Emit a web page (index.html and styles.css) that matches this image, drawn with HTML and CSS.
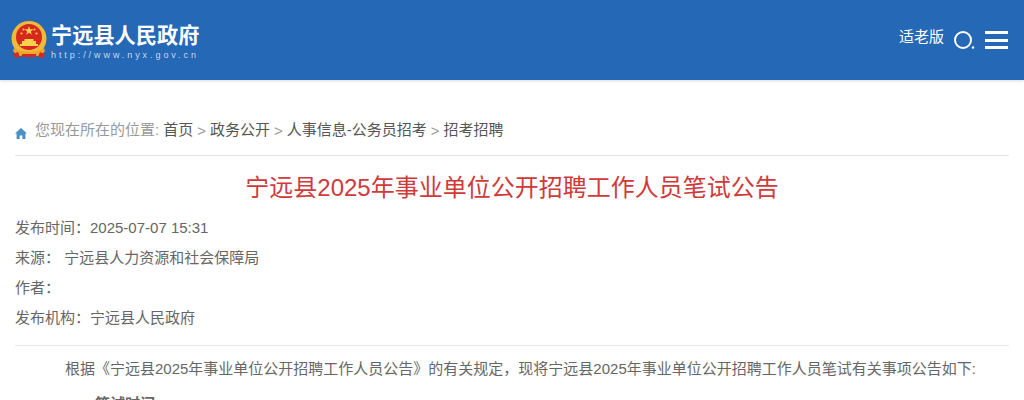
FILE: index.html
```html
<!DOCTYPE html>
<html lang="zh-CN">
<head>
    <meta charset="UTF-8">
    <title>宁远县2025年事业单位公开招聘工作人员笔试公告</title>
    <link rel="stylesheet" href="styles.css">
</head>
<body>
<header class="site-header">
    <div class="logo">
        <svg class="emblem" width="38" height="38" viewBox="0 0 38 38">
            <circle cx="19" cy="17.5" r="17.5" fill="#f0b93a"/>
            <circle cx="19" cy="16" r="13" fill="#d8281e"/>
            <polygon points="19,5 20.1,8.3 23.6,8.3 20.8,10.4 21.8,13.7 19,11.7 16.2,13.7 17.2,10.4 14.4,8.3 17.9,8.3" fill="#f7d34c"/>
            <circle cx="11.5" cy="12.5" r="1.1" fill="#f7d34c"/>
            <circle cx="26.5" cy="12.5" r="1.1" fill="#f7d34c"/>
            <circle cx="13.5" cy="8.5" r="1" fill="#f7d34c"/>
            <circle cx="24.5" cy="8.5" r="1" fill="#f7d34c"/>
            <path d="M10 25v-2h2v-3h2.5v-2h9v2H26v3h2v2z" fill="#f7d34c"/>
            <path d="M4 27c4 3 9 4 15 4s11-1 15-4l1 3c-2 3-5 5-8 5l-4-2-4 2-4-2-4 2c-3 0-6-2-8-5z" fill="#eaa62e"/>
            <path d="M3 33l5-2 2 5-5 1zM35 33l-5-2-2 5 5 1zM12 33h14v3H12z" fill="#d8281e"/>
        </svg>
        <div class="logo-text">
            <div class="logo-name">宁远县人民政府</div>
            <div class="logo-url">http://www.nyx.gov.cn</div>
        </div>
    </div>
    <div class="tools">
        <span class="elder">适老版</span>
        <svg class="search-icon" width="21" height="20" viewBox="0 0 21 20">
            <circle cx="9" cy="10" r="8" fill="none" stroke="#fff" stroke-width="2"/>
            <circle cx="19" cy="17.5" r="1.2" fill="#fff"/>
        </svg>
        <div class="menu-icon"><span></span><span></span><span></span></div>
    </div>
</header>

<main class="content">
    <div class="crumbs">
        <svg class="home-icon" width="12" height="11" viewBox="0 0 12 11">
            <path d="M6 0L12 5.6H10.4V11H7.4V7.4H4.6V11H1.6V5.6H0z" fill="#4a90c4"/>
        </svg>
        <span class="crumb-label">您现在所在的位置:</span>
        <a>首页</a><i>&gt;</i><a>政务公开</a><i>&gt;</i><a>人事信息-公务员招考</a><i>&gt;</i><a>招考招聘</a>
    </div>

    <h1 class="title">宁远县2025年事业单位公开招聘工作人员笔试公告</h1>

    <ul class="meta">
        <li>发布时间：2025-07-07 15:31</li>
        <li>来源： 宁远县人力资源和社会保障局</li>
        <li>作者：</li>
        <li>发布机构：宁远县人民政府</li>
    </ul>

    <div class="article">
        <p>根据《宁远县2025年事业单位公开招聘工作人员公告》的有关规定，现将宁远县2025年事业单位公开招聘工作人员笔试有关事项公告如下:</p>
        <p class="section">一、笔试时间</p>
    </div>
</main>
</body>
</html>
```

FILE: styles.css
```css
html, body {
    margin: 0;
    height: 400px;
    overflow: hidden;
}
body {
    font-family: "Liberation Sans", "Noto Sans CJK SC", sans-serif;
    font-size: 15px;
    color: #666;
    background: #fff;
}
.site-header {
    display: flex;
    justify-content: space-between;
    align-items: center;
    height: 80px;
    padding: 0 16px 0 10px;
    background: #2468b6;
    box-shadow: 0 1px 3px rgba(0, 0, 0, 0.15);
}
.logo {
    display: flex;
    align-items: center;
    gap: 3px;
}
.emblem {
    display: block;
}
.logo-name {
    font-size: 21.2px;
    line-height: 29px;
    font-weight: 700;
    color: #fff;
}
.logo-url {
    font-size: 9px;
    line-height: 10px;
    letter-spacing: 2.93px;
    color: #c6d8ee;
}
.tools {
    display: flex;
    align-items: center;
}
.elder {
    font-size: 15px;
    color: #fff;
    margin-right: 10px;
    margin-bottom: 10px;
}
.search-icon {
    display: block;
    margin-right: 10px;
}
.menu-icon {
    width: 23px;
}
.menu-icon span {
    display: block;
    height: 3px;
    margin: 4.5px 0;
    background: #fff;
}
.content {
    padding: 0 15px;
}
.crumbs {
    display: flex;
    align-items: flex-end;
    height: 44px;
    padding: 15px 0 16px;
    border-bottom: 1px solid #e4e4e4;
    color: #555;
}
.home-icon {
    margin: 0 8px 0 0;
}
.crumb-label {
    color: #999;
    margin-right: 4px;
}
.crumbs i {
    font-style: normal;
    color: #999;
    margin: 0 4px;
}
.title {
    margin: 0;
    font-size: 24px;
    line-height: 32px;
    padding-top: 16px;
    font-weight: 400;
    text-align: center;
    color: #d03a3a;
}
.meta {
    list-style: none;
    margin: 0;
    padding: 9px 0 12px;
    border-bottom: 1px solid #e8e8e8;
}
.meta li {
    line-height: 30px;
}
.article p {
    margin: 0;
    padding-left: 50px;
    line-height: 30px;
}
.article p:first-child {
    margin-top: 8px;
}
.article .section {
    margin-top: 5px;
    font-weight: 700;
}
```
